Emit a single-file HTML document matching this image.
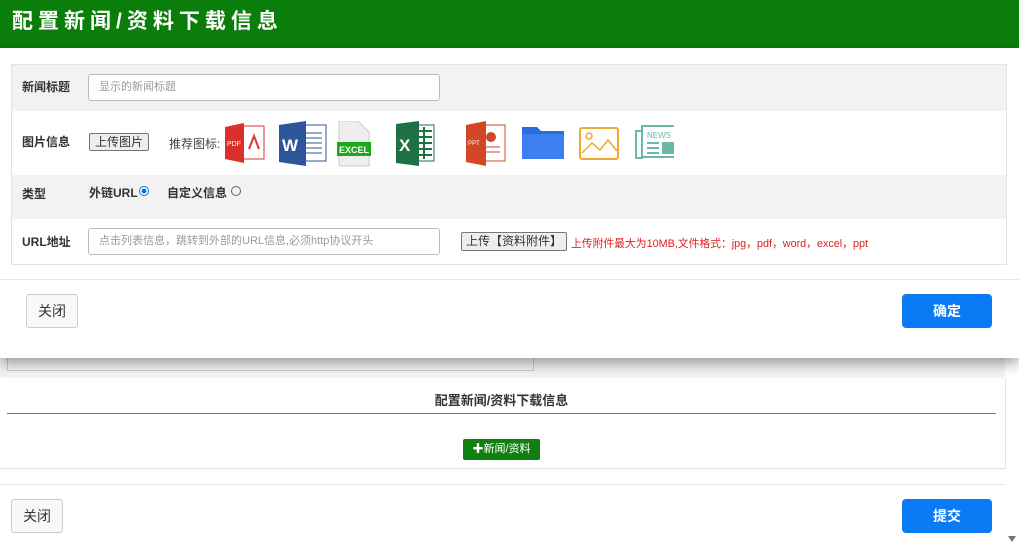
<!DOCTYPE html>
<html><head><meta charset="utf-8">
<style>
*{box-sizing:border-box;margin:0;padding:0}
body{width:1019px;height:547px;overflow:hidden;background:#fff;font-family:"Liberation Sans","Noto Sans CJK SC",sans-serif;font-size:12px;color:#333;position:relative}
.abs{position:absolute}
.hdr{left:0;top:0;width:1019px;height:48px;background:#0a7d0a;color:#fff;font-size:21px;font-weight:bold;letter-spacing:5px;line-height:44px;padding-left:12px}
.modal{left:0;top:48px;width:1019px;height:310px;background:#fff;box-shadow:0 6px 12px rgba(0,0,0,.35);z-index:2}
.form{left:11px;top:16px;width:996px;height:201px;border:1px solid #e3e3e3}
.row{position:absolute;left:0;width:994px}
.lbl{position:absolute;left:10px;font-weight:bold;font-size:12px}
.inp{position:absolute;left:76px;width:352px;height:27px;border:1px solid #bbb;border-radius:3px;background:#fff;color:#999;font-size:11px;line-height:25px;padding-left:10px}
.btn{position:absolute;border:1px solid #777;background:#eee;font-size:12px;line-height:16px;padding:0 5px;border-radius:2px}
.bclose{border:1px solid #ccc;background:#f8f8f8;border-radius:3px;font-size:14px;text-align:center;line-height:32px}
.bblue{background:#0a7bf5;color:#fff;border-radius:4px;font-size:14px;font-weight:bold;text-align:center;line-height:34px}
.radio{display:inline-block;width:10px;height:10px;border-radius:50%;border:1px solid #666;vertical-align:1px;margin-left:1px}
</style></head><body>
<div class="abs hdr">配置新闻/资料下载信息</div>
<div class="abs modal">
 <div class="abs form">
  <div class="row" style="top:0;height:46px;background:#f2f2f2">
   <span class="lbl" style="top:13px">新闻标题</span>
   <div class="inp" style="top:9px">显示的新闻标题</div>
  </div>
  <div class="row" style="top:46px;height:64px;background:#fff">
   <span class="lbl" style="top:22px">图片信息</span>
   <span class="btn" style="left:77px;top:22px">上传图片</span>
   <span class="abs" style="left:157px;top:24px;color:#444">推荐图标:</span>
   <svg class="abs" style="left:212px;top:10px" width="450" height="46" viewBox="0 0 450 46">
    <rect x="10" y="5" width="30" height="33" fill="#fff" stroke="#d33" stroke-width="1"/>
    <path d="M1 6 L20 2 L20 42 L1 38Z" fill="#d9302a"/>
    <text x="3" y="25" font-size="7" fill="#fff" font-family="Liberation Sans">PDF</text>
    <path d="M25 28 L30 15 L35 28" stroke="#d33" fill="none" stroke-width="2"/>
    <rect x="72" y="4" width="30" height="36" fill="#fff" stroke="#2b579a"/>
    <path d="M80 12h18M80 17h18M80 22h18M80 27h18M80 32h18" stroke="#2b579a"/>
    <path d="M55 4 L82 0 L82 45 L55 41Z" fill="#2b579a"/>
    <text x="58" y="30" font-size="17" font-weight="bold" fill="#fff" font-family="Liberation Sans">W</text>
    <path d="M115 0 H134 L145 11 V45 H115Z" fill="#eee" stroke="#ccc"/>
    <rect x="113" y="21" width="34" height="14" fill="#1ba81b"/>
    <text x="115" y="32" font-size="9" font-weight="bold" fill="#fff" font-family="Liberation Sans">EXCEL</text>
    <rect x="185" y="4" width="25" height="36" fill="#fff" stroke="#1e7145"/>
    <path d="M193 10h15M193 16h15M193 22h15M193 28h15M193 34h15M200 6v32" stroke="#1e7145" stroke-width="2"/>
    <path d="M172 3 L195 0 L195 45 L172 42Z" fill="#1e7145"/>
    <text x="175" y="30" font-size="17" font-weight="bold" fill="#fff" font-family="Liberation Sans">X</text>
    <rect x="253" y="4" width="28" height="36" fill="#fff" stroke="#d24726"/>
    <circle cx="267" cy="16" r="5" fill="#d24726"/>
    <path d="M260 26h16M260 31h16" stroke="#d24726"/>
    <path d="M242 4 L262 0 L262 45 L242 41Z" fill="#d24726"/>
    <text x="244" y="24" font-size="6" fill="#fff" font-family="Liberation Sans">PPT</text>
    <path d="M298 6 H313 L317 10 H340 V38 H298Z" fill="#2a6fd8"/>
    <rect x="298" y="13" width="42" height="25" fill="#3d7ff0"/>
    <rect x="356" y="7" width="38" height="31" fill="#fff" stroke="#f0a830" stroke-width="2" rx="2"/>
    <circle cx="365" cy="15" r="3" fill="none" stroke="#f0a830" stroke-width="1.5"/>
    <path d="M358 32 L368 22 L376 29 L384 19 L393 30" stroke="#f0a830" fill="none" stroke-width="1.5"/>
    <rect x="418" y="5" width="36" height="31" fill="#fff" stroke="#6bb7a8" stroke-width="2"/>
    <rect x="412" y="10" width="6" height="27" fill="#fff" stroke="#6bb7a8" stroke-width="2"/>
    <text x="423" y="17" font-size="8" fill="#6bb7a8" font-family="Liberation Sans">NEWS</text>
    <path d="M423 22h12M423 27h12M423 32h12" stroke="#6bb7a8" stroke-width="2"/>
    <rect x="438" y="21" width="12" height="12" fill="#6bb7a8"/>
   </svg>
  </div>
  <div class="row" style="top:110px;height:44px;background:#f2f2f2">
   <span class="lbl" style="top:10px">类型</span>
   <span class="abs" style="left:77px;top:9px;font-weight:bold">外链URL<span class="radio" style="border-color:#0a6fd8;background:radial-gradient(#0a6fd8 40%,#fff 45%)"></span></span>
   <span class="abs" style="left:155px;top:9px;font-weight:bold">自定义信息 <span class="radio"></span></span>
  </div>
  <div class="row" style="top:154px;height:45px;background:#fff">
   <span class="lbl" style="top:14px">URL地址</span>
   <div class="inp" style="top:9px">点击列表信息，跳转到外部的URL信息,必须http协议开头</div>
   <span class="btn" style="left:449px;top:13px;line-height:17px;padding:0 4px">上传【资料附件】</span>
   <span class="abs" style="left:559px;top:16px;color:#e02020;font-size:10.8px">上传附件最大为10MB,文件格式：jpg，pdf，word，excel，ppt</span>
  </div>
 </div>
 <div class="abs" style="left:0;top:231px;width:1019px;border-top:1px solid #e5e5e5"></div>
 <div class="abs bclose" style="left:26px;top:246px;width:52px;height:34px">关闭</div>
 <div class="abs bblue" style="left:902px;top:246px;width:90px;height:34px">确定</div>
</div>
<div class="abs" style="left:0;top:358px;width:1005px;height:20px;background:#f3f3f3"></div>
<div class="abs" style="left:7px;top:356px;width:527px;height:15px;border:1px solid #ccc;border-top:none;background:#f6f6f6"></div>
<div class="abs" style="left:0;top:378px;width:1006px;height:91px;border-right:1px solid #e3e3e3;border-bottom:1px solid #e3e3e3"></div>
<div class="abs" style="left:0;top:390px;width:1003px;text-align:center;font-weight:bold;font-size:13px">配置新闻/资料下载信息</div>
<div class="abs" style="left:7px;top:413px;width:989px;border-top:1px solid #3a86cc"></div>
<div class="abs" style="left:463px;top:439px;width:77px;height:21px;background:#118011;color:#fff;font-size:11px;text-align:center;line-height:21px;border-radius:2px"><b>✚</b>新闻/资料</div>
<div class="abs" style="left:0;top:484px;width:1006px;border-top:1px solid #e5e5e5"></div>
<div class="abs bclose" style="left:11px;top:499px;width:52px;height:34px">关闭</div>
<div class="abs bblue" style="left:902px;top:499px;width:90px;height:34px">提交</div>
<div class="abs" style="left:1008px;top:536px;width:0;height:0;border-left:4px solid transparent;border-right:4px solid transparent;border-top:6px solid #777"></div>
</body></html>
